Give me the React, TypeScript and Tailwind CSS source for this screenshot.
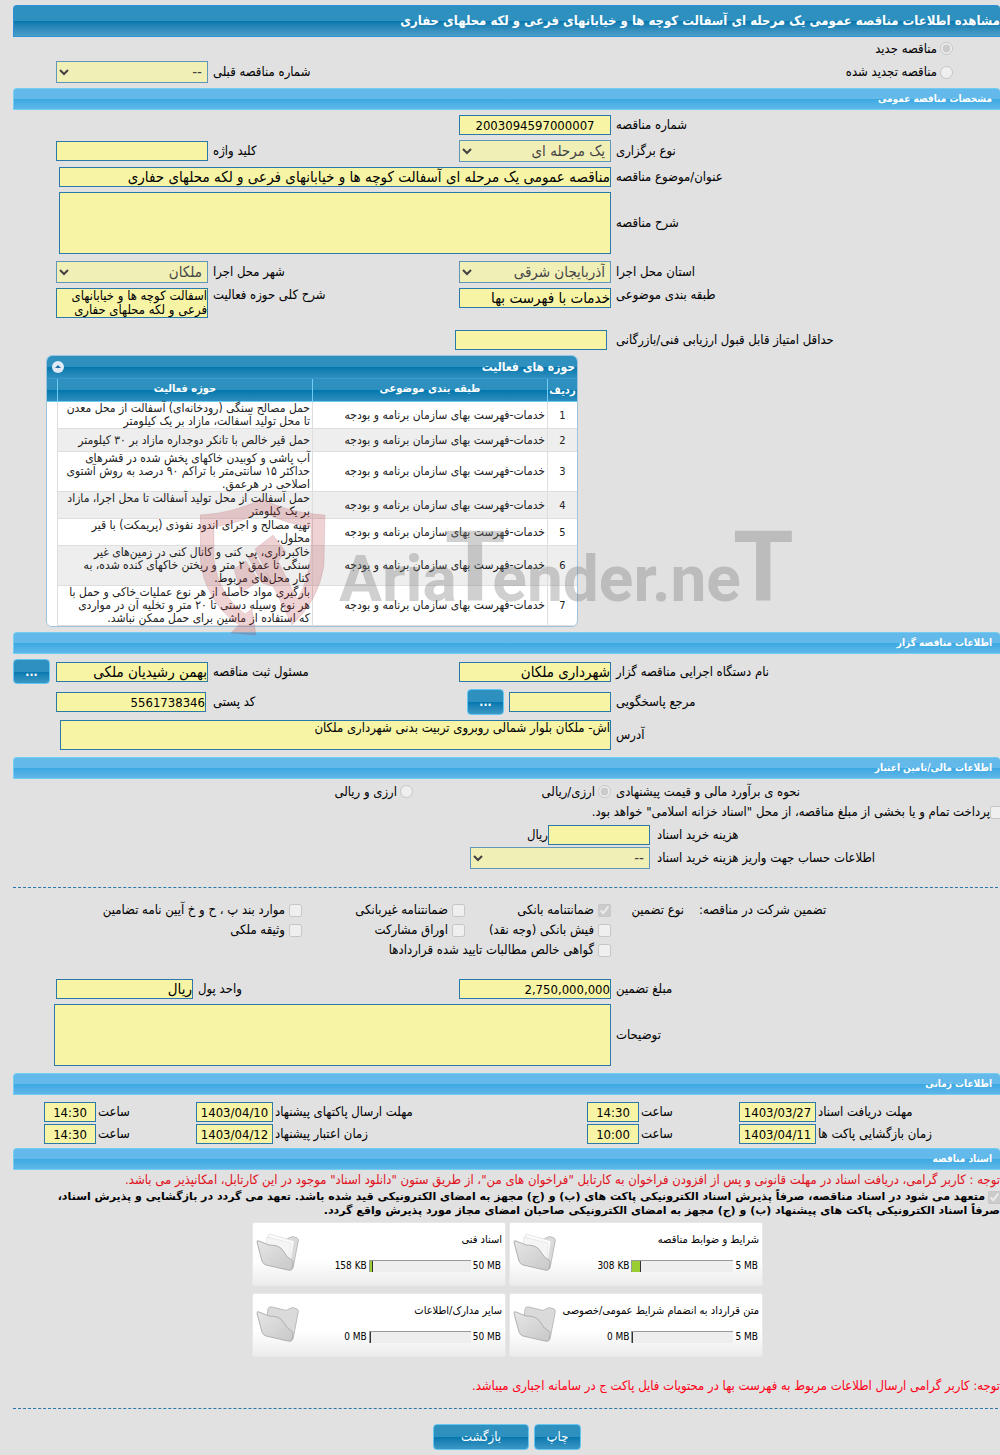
import type { ReactNode } from 'react'

const inputBase = 'h-5 border border-[#2a79a8] bg-[#f7f5a5] leading-[18px] text-black outline-none'
const inputCls = `${inputBase} text-[15px]`
const numberCls = `${inputBase} text-[13px]`
const areaCls =
  'block resize-none overflow-hidden border border-[#2a79a8] bg-[#f7f5a5] text-[13px] leading-[14px] text-black outline-none'
const selectCls =
  'h-[22px] w-full border border-[#2a79a8] bg-[#f7f5a5] px-[1px] text-[15px] leading-[18px] text-black opacity-70'
const btnCls =
  'rounded-[4px] border border-[#63c5f0] bg-linear-to-b from-[#2e90be] from-50% via-[#0077ae] via-50% to-[#3a98c4] text-white'

// label / field / label / field, starting from the right edge
const rowCls = 'grid grid-cols-[389fr_152px_251fr_152px] items-center pl-14'

const activities = [
  ['حمل مصالح سنگی (رودخانه‌ای) آسفالت از محل معدن', 'تا محل تولید آسفالت، مازاد بر یک کیلومتر'],
  ['حمل قیر خالص با تانکر دوجداره مازاد بر ۳۰ کیلومتر'],
  ['آب پاشی و کوبیدن خاکهای پخش شده در قشرهای', 'حداکثر ۱۵ سانتی‌متر با تراکم ۹۰ درصد به روش آشتوی', 'اصلاحی در هرعمق.'],
  ['حمل آسفالت از محل تولید آسفالت تا محل اجرا، مازاد', 'بر یک کیلومتر'],
  ['تهیه مصالح و اجرای اندود نفوذی (پریمکت) با قیر', 'محلول.'],
  ['خاکبرداری، پی کنی و کانال کنی در زمین‌های غیر', 'سنگی تا عمق ۲ متر و ریختن خاکهای کنده شده، به', 'کنار محل‌های مربوط.'],
  ['بارگیری مواد حاصله از هر نوع عملیات خاکی و حمل با', 'هر نوع وسیله دستی تا ۲۰ متر و تخلیه آن در مواردی', 'که استفاده از ماشین برای حمل ممکن نباشد.'],
]

const rowHeights = ['h-[27px]', 'h-[23px]', 'h-[40px]', 'h-[27px]', 'h-[27px]', 'h-[40px]', 'h-[40px]']

const dates = [
  { id: 'receive', label: 'مهلت دریافت اسناد', date: '1403/03/27', time: '14:30' },
  { id: 'send', label: 'مهلت ارسال پاکتهای پیشنهاد', date: '1403/04/10', time: '14:30' },
  { id: 'open', label: 'زمان بازگشایی پاکت ها', date: '1403/04/11', time: '10:00' },
  { id: 'valid', label: 'زمان اعتبار پیشنهاد', date: '1403/04/12', time: '14:30' },
]

const docs = [
  { title: 'شرایط و ضوابط مناقصه', used: '308 KB', max: '5 MB', fill: 8, full: true },
  { title: 'اسناد فنی', used: '158 KB', max: '50 MB', fill: 2, full: true },
  { title: 'متن قرارداد به انضمام شرایط عمومی/خصوصی', used: '0 MB', max: '5 MB', fill: 0, full: false },
  { title: 'سایر مدارک/اطلاعات', used: '0 MB', max: '50 MB', fill: 0, full: false },
]

function Bar({ children, className }: { children: ReactNode; className: string }) {
  return (
    <h2
      className={`ml-[13px] flex h-[22px] items-center rounded-t-[4px] border border-r-0 border-[#73cdf3] bg-linear-to-b from-[#63b9e9] from-50% via-[#3aa8e2] via-50% to-[#5fb7e8] pr-2 text-[10px] font-bold text-white ${className}`}
    >
      {children}
    </h2>
  )
}

function Label({ htmlFor, children, className = 'pl-[5px]' }: { htmlFor: string; children: ReactNode; className?: string }) {
  return (
    <label htmlFor={htmlFor} className={`text-left ${className}`}>
      {children}
    </label>
  )
}

function Check({ id, children, checked = false }: { id: string; children: ReactNode; checked?: boolean }) {
  return (
    <div className="flex items-center gap-1 whitespace-nowrap">
      <input id={id} type="checkbox" disabled defaultChecked={checked} className="size-[13px]" />
      <label htmlFor={id}>{children}</label>
    </div>
  )
}

function Folder({ full }: { full: boolean }) {
  return (
    <svg viewBox="0 0 44 40" className="h-10 w-11 shrink-0" aria-hidden="true">
      <defs>
        <linearGradient id="folderFront" x1="0" y1="0" x2="1" y2="1">
          <stop offset="0" stopColor="#e6e6e6" />
          <stop offset="1" stopColor="#c8c8c8" />
        </linearGradient>
      </defs>
      <path
        d="M12 5 Q13 2 16 3 L28 6 Q31 7 33 5 Q36 2 41 5 Q43 6 42 9 L37 35 Q36 38 33 36 L10 26 Z"
        fill="#dadada"
        stroke="#bcbcbc"
      />
      {full && (
        <>
          <path d="M13 1 L38 8 L34 34 L8 22 Z" fill="#fcfcfc" stroke="#dcdcdc" strokeWidth="0.7" />
          <path d="M11 4 L35 10 L33 34 L8 22 Z" fill="#f5f5f5" stroke="#e2e2e2" strokeWidth="0.7" />
        </>
      )}
      <path
        d="M1 9 Q1 7 3 8 L13 12 Q17 12 21 13 Q25 14 28 19 Q31 25 36 27 Q37 28 37 30 L36 36 Q35 38 32 37 L10 32 Q7 31 6 28 Z"
        fill="url(#folderFront)"
        stroke="#b0b0b0"
      />
    </svg>
  )
}

function Watermark() {
  return (
    <div dir="ltr" className="pointer-events-none absolute top-[144px] left-[154px]" aria-hidden="true">
      <svg viewBox="0 0 610 140" className="h-[140px] w-[610px]">
        <path
          fillRule="evenodd"
          d="M0 16 Q34 14 62 0 Q90 14 125 16 L124 66 Q119 101 92 126 L55 50 L73 36 L86 53 L78 62 L97 100 Q108 84 111 54 L111 28 Q84 25 62 12 Q42 24 14 28 L14 60 Q18 95 45 115 L52 110 L56 136 L31 134 L39 126 Q5 103 0 60 Z M34 70 L46 62 L59 82 L41 94 Z M48 58 L53 54 L75 88 L62 84 Z"
          fill="#b8323c"
          fillOpacity="0.22"
          stroke="#8a3a40"
          strokeOpacity="0.12"
        />
        <text
          x="139"
          y="102"
          fill="#707070"
          opacity="0.32"
          fontFamily="Roboto, 'Liberation Sans', sans-serif"
          fontWeight="700"
          fontSize="64"
        >
          Aria
          <tspan dx="-12" fontSize="98">
            T
          </tspan>
          <tspan dx="-13">ender.ne</tspan>
          <tspan dx="-8" fontSize="98">
            T
          </tspan>
        </text>
      </svg>
    </div>
  )
}

export default function App() {
  return (
    <main
      dir="rtl"
      lang="fa"
      className="min-h-screen overflow-hidden bg-[#e1e1e1] pt-[5px] pb-[5px] font-['DejaVu_Sans_Condensed','DejaVu_Sans',sans-serif] text-[13px] leading-[14px] text-black"
    >
      <h1 className="ml-[13px] flex h-8 items-center overflow-hidden rounded-t-[4px] border border-r-0 border-[#2d8fd6] bg-linear-to-b from-[#2e90be] from-50% via-[#0077ae] via-50% to-[#4a9fc8] text-[13px] font-bold whitespace-nowrap text-white">
        مشاهده اطلاعات مناقصه عمومی یک مرحله ای آسفالت کوچه ها و خیابانهای فرعی و لکه محلهای حفاری
      </h1>

      <div className="flex h-[23px] items-center gap-[3px] pr-[47px]">
        <input id="new" type="radio" name="kind" disabled defaultChecked className="size-[13px]" />
        <label htmlFor="new">مناقصه جدید</label>
      </div>
      <div className={`${rowCls} mt-px`}>
        <div className="flex items-center gap-[3px] pr-[47px]">
          <input id="renewed" type="radio" name="kind" disabled className="size-[13px]" />
          <label htmlFor="renewed">مناقصه تجدید شده</label>
        </div>
        <span />
        <Label htmlFor="prev">شماره مناقصه قبلی</Label>
        <select id="prev" disabled className={selectCls}>
          <option>--</option>
        </select>
      </div>

      <Bar className="mt-[5px]">مشخصات مناقصه عمومی</Bar>
      <div className="mt-[5px] flex flex-col gap-[5px]">
        <div className={rowCls}>
          <Label htmlFor="number">شماره مناقصه</Label>
          <input id="number" readOnly defaultValue="2003094597000007" className={`${numberCls} text-center`} />
        </div>
        <div className={rowCls}>
          <Label htmlFor="type">نوع برگزاری</Label>
          <select id="type" disabled className={selectCls}>
            <option>یک مرحله ای</option>
          </select>
          <Label htmlFor="keyword">کلید واژه</Label>
          <input id="keyword" readOnly className={inputCls} />
        </div>
        <div className={rowCls}>
          <Label htmlFor="subject">عنوان/موضوع مناقصه</Label>
          <input
            id="subject"
            readOnly
            defaultValue="مناقصه عمومی یک مرحله ای آسفالت کوچه ها و خیابانهای فرعی و لکه محلهای حفاری"
            className={`${inputCls} col-span-3 ml-[3px]`}
          />
        </div>
        <div className={rowCls}>
          <Label htmlFor="desc">شرح مناقصه</Label>
          <textarea id="desc" readOnly className={`${areaCls} col-span-3 ml-[3px] h-[62px]`} />
        </div>
        <div className={`${rowCls} mt-[2px]`}>
          <Label htmlFor="province">استان محل اجرا</Label>
          <select id="province" disabled className={selectCls}>
            <option>آذربایجان شرقی</option>
          </select>
          <Label htmlFor="city">شهر محل اجرا</Label>
          <select id="city" disabled className={selectCls}>
            <option>ملکان</option>
          </select>
        </div>
        <div className="grid grid-cols-[389fr_152px_251fr_152px] items-start pl-14">
          <Label htmlFor="category">طبقه بندی موضوعی</Label>
          <input id="category" readOnly defaultValue="خدمات با فهرست بها" className={inputCls} />
          <Label htmlFor="scope">شرح کلی حوزه فعالیت</Label>
          <textarea
            id="scope"
            readOnly
            defaultValue="آسفالت کوچه ها و خیابانهای فرعی و لکه محلهای حفاری"
            className={`${areaCls} h-[30px]`}
          />
        </div>
        <div className={`${rowCls} mt-[7px]`}>
          <Label htmlFor="score">حداقل امتیاز قابل قبول ارزیابی فنی/بازرگانی</Label>
          <input id="score" readOnly className={`${inputCls} mr-1 w-[152px]`} />
        </div>
      </div>

      <div className="relative mt-[5px] mr-[422px] ml-[46px]">
        <div className="overflow-hidden rounded-[6px] border border-[#9cc4e0] bg-white">
          <div className="flex h-[23px] items-center justify-between border-b border-[#3f97d0] bg-linear-to-b from-[#2e90be] from-50% via-[#0077ae] via-50% to-[#2e90be] pr-[2px] pl-[5px] text-[12px] font-bold text-white">
            <span>حوزه های فعالیت</span>
            <button type="button" aria-label="بستن" className="grid size-3 place-items-center rounded-full bg-[#dfeaf6]">
              <svg viewBox="0 0 12 12" className="size-3">
                <path d="M3 7 L6 4 L9 7 Z" fill="#1c6f9e" />
              </svg>
            </button>
          </div>
          <table className="w-full table-fixed border-separate border-spacing-0 text-[12px] leading-[13px] text-[#222]">
            <thead>
              <tr className="h-[23px] bg-linear-to-b from-[#2e90be] from-50% via-[#0077ae] via-50% to-[#2e90be] text-[11px] text-white">
                <th className="w-[30px] border-b border-l border-[#6fcbf2] p-0">ردیف</th>
                <th className="w-[235px] border-b border-l border-[#6fcbf2] p-0 pb-1">طبقه بندی موضوعی</th>
                <th className="border-b border-l border-[#6fcbf2] p-0 pb-1">حوزه فعالیت</th>
                <th className="w-[10px] border-b border-[#6fcbf2] p-0" />
              </tr>
            </thead>
            <tbody>
              {activities.map((lines, i) => (
                <tr key={i} className={`${rowHeights[i]} even:bg-[#eee]`}>
                  <td className="border-b border-l border-[#dedede] p-0 text-center text-[11px]">{i + 1}</td>
                  <td className="border-b border-l border-[#dedede] p-0 pr-[2px] whitespace-nowrap">
                    خدمات-فهرست بهای سازمان برنامه و بودجه
                  </td>
                  <td className="border-b border-l border-[#dedede] p-0 pr-[2px] whitespace-nowrap">
                    {lines.map((line) => (
                      <div key={line}>{line}</div>
                    ))}
                  </td>
                  <td className="bg-white p-0" />
                </tr>
              ))}
            </tbody>
          </table>
        </div>
        <Watermark />
      </div>

      <Bar className="mt-[5px]">اطلاعات مناقصه گزار</Bar>
      <div className="mt-[5px] flex flex-col gap-[5px]">
        <div className="grid grid-cols-[389fr_152px_251fr_152px_43px] items-center pl-[13px]">
          <Label htmlFor="org">نام دستگاه اجرایی مناقصه گزار</Label>
          <input id="org" readOnly defaultValue="شهرداری ملکان" className={inputCls} />
          <Label htmlFor="officer">مسئول ثبت مناقصه</Label>
          <input id="officer" readOnly defaultValue="بهمن رشیدیان ملکی" className={inputCls} />
          <button type="button" className={`${btnCls} mr-[6px] h-[25px] text-[12px] font-bold`}>
            ...
          </button>
        </div>
        <div className={rowCls}>
          <Label htmlFor="contact">مرجع پاسخگویی</Label>
          <div className="flex items-center gap-[5px]">
            <input id="contact" readOnly className={`${inputCls} w-[102px] shrink-0`} />
            <button type="button" className={`${btnCls} h-[26px] w-[37px] shrink-0 text-[12px] font-bold`}>
              ...
            </button>
          </div>
          <Label htmlFor="postal">کد پستی</Label>
          <input id="postal" readOnly defaultValue="5561738346" className={`${numberCls} mr-[2px]`} />
        </div>
        <div className={rowCls}>
          <Label htmlFor="address">آدرس</Label>
          <textarea
            id="address"
            readOnly
            defaultValue="آش- ملکان بلوار شمالی روبروی تربیت بدنی شهرداری ملکان"
            className={`${areaCls} col-span-3 ml-1 h-[30px]`}
          />
        </div>
      </div>

      <Bar className="mt-[7px]">اطلاعات مالی/تامین اعتبار</Bar>
      <div className="mt-px grid h-[23px] grid-cols-[389fr_198px_413fr] items-center">
        <span className="pl-[5px] text-left">نحوه ی برآورد مالی و قیمت پیشنهادی</span>
        <div className="flex items-center gap-[3px]">
          <input id="rial" type="radio" name="currency" disabled defaultChecked className="size-[13px]" />
          <label htmlFor="rial">ارزی/ریالی</label>
        </div>
        <div className="flex items-center gap-[3px]">
          <input id="both" type="radio" name="currency" disabled className="size-[13px]" />
          <label htmlFor="both">ارزی و ریالی</label>
        </div>
      </div>
      <div className="-mr-[3px] flex h-[18px] items-center">
        <input id="treasury" type="checkbox" disabled className="size-[13px]" />
        <label htmlFor="treasury">پرداخت تمام و یا بخشی از مبلغ مناقصه، از محل "اسناد خزانه اسلامی" خواهد بود.</label>
      </div>
      <div className="mt-1 grid grid-cols-[350fr_650fr] items-center gap-y-[2px]">
        <Label htmlFor="cost" className="pl-[7px]">
          هزینه خرید اسناد
        </Label>
        <div className="flex items-center">
          <input id="cost" readOnly className={`${inputCls} w-[102px]`} />
          <span>ریال</span>
        </div>
        <Label htmlFor="account" className="pl-[7px]">
          اطلاعات حساب جهت واریز هزینه خرید اسناد
        </Label>
        <div className="w-[180px]">
          <select id="account" disabled className={selectCls}>
            <option>--</option>
          </select>
        </div>
      </div>

      <hr className="mt-[18px] mr-[2px] ml-[13px] border-t border-dashed border-[#2a79a8]" />

      <fieldset className="mt-3 grid h-[60px] grid-cols-[301fr_88fr_146fr_163fr_302fr] grid-rows-3 items-center whitespace-nowrap">
        <span className="text-left">تضمین شرکت در مناقصه:</span>
        <span className="pr-[15px]">نوع تضمین</span>
        <Check id="g1" checked>
          ضمانتنامه بانکی
        </Check>
        <Check id="g2">ضمانتنامه غیربانکی</Check>
        <Check id="g3">موارد بند پ ، ح و خ آیین نامه تضامین</Check>
        <div className="col-start-3">
          <Check id="g4">فیش بانکی (وجه نقد)</Check>
        </div>
        <Check id="g5">اوراق مشارکت</Check>
        <Check id="g6">وثیقه ملکی</Check>
        <div className="col-span-2 col-start-3">
          <Check id="g7">گواهی خالص مطالبات تایید شده قراردادها</Check>
        </div>
      </fieldset>

      <div className="mt-[19px] flex flex-col gap-[5px]">
        <div className={rowCls}>
          <Label htmlFor="amount">مبلغ تضمین</Label>
          <input id="amount" readOnly defaultValue="2,750,000,000" className={numberCls} />
          <div className="col-span-2 flex items-center justify-end">
            <Label htmlFor="unit">واحد پول</Label>
            <input id="unit" readOnly defaultValue="ریال" className={`${inputCls} w-[137px]`} />
          </div>
        </div>
        <div className={rowCls}>
          <Label htmlFor="notes">توضیحات</Label>
          <textarea id="notes" readOnly className={`${areaCls} col-span-3 -ml-[2px] h-[62px]`} />
        </div>
      </div>

      <Bar className="mt-[7px]">اطلاعات زمانی</Bar>
      <div className="mt-[7px] grid grid-cols-[413fr_543fr] gap-y-[2px] pl-11">
        {dates.map(({ id, label, date, time }) => (
          <div key={id} className="grid grid-cols-[1fr_77px_100px_52px] items-center">
            <label htmlFor={`${id}-date`} className="pl-[2px] text-left">
              {label}
            </label>
            <input id={`${id}-date`} readOnly defaultValue={date} className={`${numberCls} text-center`} />
            <label htmlFor={`${id}-time`} className="pl-[2px] text-left">
              ساعت
            </label>
            <input id={`${id}-time`} readOnly defaultValue={time} className={`${numberCls} text-center`} />
          </div>
        ))}
      </div>

      <Bar className="mt-1">اسناد مناقصه</Bar>
      <p className="flex h-5 items-center whitespace-nowrap text-[#e0101c]">
        توجه : کاربر گرامی، دریافت اسناد در مهلت قانونی و پس از افزودن فراخوان به کارتابل "فراخوان های من"، از طریق ستون
        "دانلود اسناد" موجود در این کارتابل، امکانپذیر می باشد.
      </p>
      <div className="font-['DejaVu_Sans',sans-serif] text-[11px] font-bold whitespace-nowrap">
        <div className="-mr-px flex h-[14px] items-center gap-[3px]">
          <input id="accept" type="checkbox" disabled defaultChecked className="size-[13px]" />
          <label htmlFor="accept">
            متعهد می شود در اسناد مناقصه، صرفاً پذیرش اسناد الکترونیکی پاکت های (ب) و (ج) مجهز به امضای الکترونیکی قید شده
            باشد. تعهد می گردد در بازگشایی و پذیرش اسناد،
          </label>
        </div>
        <p>صرفاً اسناد الکترونیکی پاکت های پیشنهاد (ب) و (ج) مجهز به امضای الکترونیکی صاحبان امضای مجاز مورد پذیرش واقع گردد.</p>
      </div>

      <div className="mt-1 mr-[237px] grid w-[511px] grid-cols-2 gap-x-[3px] gap-y-[7px]">
        {docs.map(({ title, used, max, fill, full }) => (
          <section
            key={title}
            className="flex h-16 items-center justify-between rounded-[2px] border border-[#e8e8e8] bg-linear-to-b from-white from-60% to-[#ececec] px-[3px] pb-[2px]"
          >
            <div className="flex flex-col gap-3">
              <h3 className="text-[11px] whitespace-nowrap">{title}</h3>
              <div className="flex items-center gap-[2px] pr-px text-[10px]">
                <span dir="ltr">{max}</span>
                <div dir="ltr" className="flex h-3 w-[102px] border-t border-l border-[#999] bg-[#eee]">
                  <div className="border-r border-[#333] bg-[#9acd32]" style={{ width: fill + 1 }} />
                </div>
                <span dir="ltr">{used}</span>
              </div>
            </div>
            <Folder full={full} />
          </section>
        ))}
      </div>

      <p className="mt-[19px] flex h-5 items-center whitespace-nowrap text-[#ff0018]">
        توجه: کاربر گرامی ارسال اطلاعات مربوط به فهرست بها در محتویات فایل پاکت ج در سامانه اجباری میباشد.
      </p>
      <hr className="mt-3 mr-[2px] ml-[13px] border-t border-dashed border-[#2a79a8]" />
      <div className="mt-[15px] flex justify-center gap-[5px] pl-[14px]">
        <button type="button" className={`${btnCls} h-[26px] w-[47px]`}>
          چاپ
        </button>
        <button type="button" className={`${btnCls} h-[26px] w-24`}>
          بازگشت
        </button>
      </div>
    </main>
  )
}
